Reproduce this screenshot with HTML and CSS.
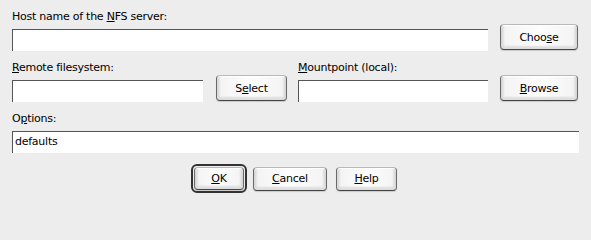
FILE: index.html
```html
<!DOCTYPE html>
<html>
<head>
<meta charset="utf-8">
<link rel="stylesheet" href="styles.css">
</head>
<body>
<div class="dialog">
  <div class="label">Host name of the <u>N</u>FS server:</div>
  <div class="row">
    <div class="field wide"></div>
    <button class="btn w78">Choo<u>s</u>e</button>
  </div>
  <div class="pair">
    <div class="group">
      <div class="label"><u>R</u>emote filesystem:</div>
      <div class="row">
        <div class="field f191"></div>
        <button class="btn w71 ml13">S<u>e</u>lect</button>
      </div>
    </div>
    <div class="group">
      <div class="label"><u>M</u>ountpoint (local):</div>
      <div class="row">
        <div class="field f190"></div>
        <button class="btn w78"><u>B</u>rowse</button>
      </div>
    </div>
  </div>
  <div class="label">O<u>p</u>tions:</div>
  <div class="field options">defaults</div>
  <div class="actions">
    <div class="focus"><button class="btn w50"><u>O</u>K</button></div>
    <button class="btn w74"><u>C</u>ancel</button>
    <button class="btn w61"><u>H</u>elp</button>
  </div>
</div>
</body>
</html>
```
FILE: styles.css
```css
html, body {
  margin: 0;
  padding: 0;
  background: #ededed;
}
body {
  width: 591px;
  height: 201px;
  overflow: hidden;
  font-family: "DejaVu Sans", sans-serif;
  font-size: 11px;
  letter-spacing: -0.25px;
  color: #000;
}
.dialog {
  padding: 9px 12px 0 12px;
}
.label {
  height: 15px;
  line-height: 15px;
  white-space: nowrap;
}
u {
  text-decoration: underline;
  text-underline-offset: 1px;
}
.row {
  display: flex;
  align-items: flex-end;
  height: 27px;
  margin-bottom: 9px;
}
.field {
  box-sizing: border-box;
  height: 22px;
  background: #fff;
  border-top: 1px solid #555;
  border-left: 1px solid #555;
  line-height: 20px;
  padding-left: 2px;
}
.wide { width: 476px; margin-right: 12px; }
.f191 { width: 191px; }
.f190 { width: 190px; margin-right: 12px; }
.options { width: 567px; margin-top: 5px; }
.pair {
  display: flex;
}
.group:first-child { width: 275px; margin-right: 11px; }
.group:last-child { width: 280px; }
.btn {
  box-sizing: border-box;
  height: 26px;
  margin: 0 0 1px 0;
  padding: 0;
  font-family: "DejaVu Sans", sans-serif;
  font-size: 11px;
  letter-spacing: -0.25px;
  color: #000;
  border: 1px solid #6a6a6a;
  border-top-color: #b8b8b8;
  border-bottom-color: #444;
  border-radius: 4px;
  background: linear-gradient(to right, #cfcfcf 0, #f4f4f4 4px, #fdfdfd 50%, #f4f4f4 calc(100% - 4px), #cfcfcf 100%);
  box-shadow: inset 0 1px 0 #fff, inset 0 -3px 2px #dedede, 0 1px 1px rgba(0,0,0,0.15);
}
.w78 { width: 78px; }
.w71 { width: 71px; }
.ml13 { margin-left: 13px; }
.w50 { width: 50px; height: 23px; margin: 0; display: block; }
.w74 { width: 74px; height: 24px; margin: 0 0 0 6px; }
.w61 { width: 61px; height: 24px; margin: 0 0 0 9px; }
.actions {
  display: flex;
  align-items: center;
  margin-top: 11px;
  padding-left: 179px;
}
.focus {
  border: 2px solid #333;
  border-radius: 6px;
  padding: 1px;
}
```
